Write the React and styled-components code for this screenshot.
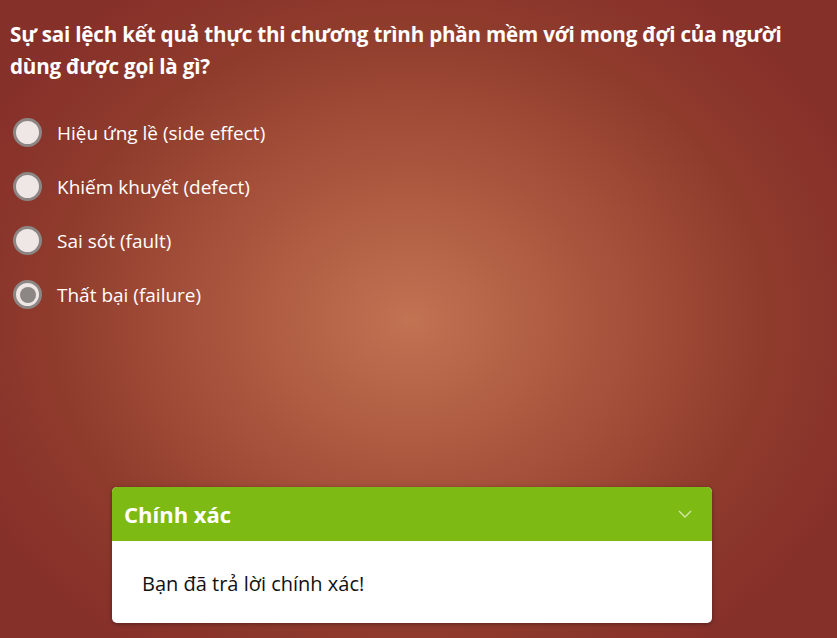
import React, { useState } from "react";
import styled, { createGlobalStyle } from "styled-components";

const GlobalStyle = createGlobalStyle`
  html, body {
    margin: 0;
    padding: 0;
  }
  body {
    font-family: "Open Sans", "Noto Sans", sans-serif;
  }
`;

const Page = styled.div`
  width: 837px;
  height: 638px;
  box-sizing: border-box;
  padding: 18px 10px 0 10px;
  display: flex;
  flex-direction: column;
  overflow: hidden;
  background: radial-gradient(
    ellipse 480px 400px at 410px 320px,
    #c27352 0%,
    #a8543d 40%,
    #8f3b2c 75%,
    #86302a 100%
  );
  color: #fff;
`;

const Question = styled.h1`
  margin: 0;
  max-width: 800px;
  font-size: 20.6px;
  font-weight: 700;
  line-height: 32px;
  letter-spacing: -0.2px;
`;

const Options = styled.div`
  display: flex;
  flex-direction: column;
  gap: 25px;
  margin-top: 36px;
`;

const Option = styled.label`
  display: flex;
  align-items: center;
  gap: 15px;
  font-size: 19px;
  cursor: pointer;
`;

const Radio = styled.span`
  width: 23px;
  height: 23px;
  flex: none;
  margin-left: 3px;
  border-radius: 50%;
  border: 3px solid #8c8684;
  background: #efe6e6;
  display: flex;
  align-items: center;
  justify-content: center;

  &::after {
    content: "";
    width: 16px;
    height: 16px;
    border-radius: 50%;
    background: ${(p) => (p.$checked ? "#8c8684" : "transparent")};
  }
`;

const Spacer = styled.div`
  flex: 1;
`;

const Card = styled.div`
  width: 600px;
  margin: 0 0 15px 102px;
  border-radius: 5px;
  overflow: hidden;
  background: #fff;
  box-shadow: 0 1px 4px rgba(0, 0, 0, 0.35);
`;

const CardHeader = styled.div`
  height: 54px;
  background: #7dba13;
  display: flex;
  align-items: center;
  justify-content: space-between;
  padding: 0 20px 0 12px;
  font-size: 22px;
  font-weight: 700;
`;

const CardBody = styled.div`
  padding: 30px 30px 26px 30px;
  color: #111;
  font-size: 20px;
  line-height: 26px;
`;

const options = [
  "Hiệu ứng lề (side effect)",
  "Khiếm khuyết (defect)",
  "Sai sót (fault)",
  "Thất bại (failure)",
];

const App = () => {
  const [selected, setSelected] = useState(3);

  return (
    <Page>
      <GlobalStyle />
      <Question>
        Sự sai lệch kết quả thực thi chương trình phần mềm với mong đợi của người
        dùng được gọi là gì?
      </Question>
      <Options>
        {options.map((text, i) => (
          <Option key={i} onClick={() => setSelected(i)}>
            <Radio $checked={selected === i} />
            {text}
          </Option>
        ))}
      </Options>
      <Spacer />
      <Card>
        <CardHeader>
          Chính xác
          <svg width="14" height="8" viewBox="0 0 14 8">
            <path d="M1 1l6 6 6-6" fill="none" stroke="#d6eab0" strokeWidth="1.3" />
          </svg>
        </CardHeader>
        <CardBody>Bạn đã trả lời chính xác!</CardBody>
      </Card>
    </Page>
  );
};

export default App;
